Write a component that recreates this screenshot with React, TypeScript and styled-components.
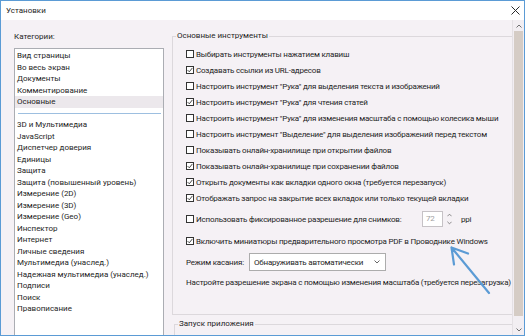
import React from "react";
import styled, { createGlobalStyle } from "styled-components";

const FONT = `Roboto, "Noto Sans", "Liberation Sans", sans-serif`;

const GlobalStyle = createGlobalStyle`
  html, body { margin: 0; padding: 0; background: #ffffff; }
  body { font-family: ${FONT}; }
  * { box-sizing: border-box; }
`;

const Window = styled.div`
  position: relative;
  width: 525px;
  height: 336px;
  border: 1px solid #5b9bd5;
  display: flex;
  flex-direction: column;
  overflow: hidden;
  background: #f5f1f5;
  color: #1e1e1e;
  font-size: 8px;
  font-family: ${FONT};
`;

const TitleBar = styled.div`
  height: 19px;
  flex: none;
  background: #ffffff;
  display: flex;
  align-items: center;
  justify-content: space-between;
  padding: 0 4px 0 5px;
  line-height: 10px;
`;

const Body = styled.div`
  flex: 1;
  min-height: 0;
  display: flex;
`;

const LeftPane = styled.div`
  width: 165px;
  flex: none;
  display: flex;
  flex-direction: column;
  padding: 12px 0 0 13px;
`;

const PaneLabel = styled.div`
  line-height: 10px;
  height: 10px;
  margin-bottom: 6px;
`;

const ListBox = styled.div`
  width: 150px;
  flex: 1;
  background: #ffffff;
  border: 1px solid #abadb3;
  border-bottom: none;
  padding-top: 1px;
`;

const ListItem = styled.div<{ $selected?: boolean }>`
  height: 11.5px;
  line-height: 11.5px;
  padding-left: 2px;
  white-space: nowrap;
  background: ${(p) => (p.$selected ? "#ece8ec" : "transparent")};
`;

const ListSeparator = styled.div`
  height: 11.5px;
  display: flex;
  align-items: center;
  padding: 0 2px 0 3px;
  &::after {
    content: "";
    flex: 1;
    height: 1px;
    background: #9dbfe0;
  }
`;

const RightPane = styled.div`
  flex: 1;
  min-width: 0;
  display: flex;
`;

const Content = styled.div`
  flex: 1;
  min-width: 0;
  overflow: hidden;
  padding: 11px 0 0 6px;
`;

const Group = styled.fieldset<{ $indent?: number }>`
  margin: 0 0 0 ${(p) => p.$indent ?? 0}px;
  padding: 0;
  border: 1px solid #dcd8dc;
  border-right: none;
  min-width: 0;
`;

const GroupTitle = styled.legend`
  margin-left: 3px;
  padding: 0 1px;
  line-height: 10px;
  height: 10px;
`;

const Rows = styled.div<{ $bottom: number }>`
  padding: 5px 0 ${(p) => p.$bottom}px 13px;
  letter-spacing: -0.2px;
`;

const Row = styled.div<{ $top?: number; $h?: number }>`
  display: flex;
  align-items: center;
  height: ${(p) => p.$h ?? 16}px;
  margin-top: ${(p) => p.$top ?? 0}px;
  white-space: nowrap;
`;

const Box = styled.span`
  width: 8px;
  height: 8px;
  flex: none;
  border: 1px solid #333333;
  background: #ffffff;
  margin-right: 2px;
  display: flex;
  align-items: center;
  justify-content: center;
`;

const FixedLabel = styled.span<{ $w: number }>`
  width: ${(p) => p.$w}px;
  flex: none;
`;

const SpinInput = styled.span`
  width: 21px;
  height: 16px;
  flex: none;
  border: 1px solid #c6c2c6;
  background: #ffffff;
  color: #a0a0a0;
  padding-left: 3px;
  line-height: 14px;
`;

const SpinButtons = styled.span`
  width: 7px;
  height: 16px;
  margin-left: 3px;
  flex: none;
  display: flex;
  flex-direction: column;
  justify-content: space-around;
  align-items: center;
`;

const Unit = styled.span`
  margin-left: 8px;
`;

const Select = styled.span`
  width: 137px;
  height: 18px;
  flex: none;
  border: 1px solid #acacac;
  background: #ffffff;
  display: flex;
  align-items: center;
  justify-content: space-between;
  padding: 0 5px 0 4px;
`;

const SecondGroup = styled(Group)`
  margin-top: 4px;
  height: 40px;
`;

const ScrollBar = styled.div`
  width: 12px;
  flex: none;
  display: flex;
  flex-direction: column;
  background: #f2eef2;
  border-left: 1px solid #e4e0e4;
`;

const ScrollButton = styled.div`
  height: 11px;
  flex: none;
  display: flex;
  align-items: center;
  justify-content: center;
`;

const Track = styled.div`
  flex: 1;
  padding: 0 1px 8px 1px;
  display: flex;
`;

const Thumb = styled.div`
  flex: 1;
  background: #d5ccc5;
`;

const ArrowOverlay = styled.svg`
  position: absolute;
  left: 440px;
  top: 238px;
  pointer-events: none;
`;

const Check = () => (
  <svg width="6" height="6" viewBox="0 0 6 6">
    <path d="M0.6 3.1 L2.3 4.8 L5.4 0.9" fill="none" stroke="#333" strokeWidth="0.9" />
  </svg>
);

const CheckBox = ({ checked }: { checked?: boolean }) => <Box>{checked ? <Check /> : null}</Box>;

const Chevron = ({ up, size = 5, color = "#555" }: { up?: boolean; size?: number; color?: string }) => (
  <svg width={size} height={Math.ceil(size / 2) + 1} viewBox="0 0 6 4">
    <path
      d={up ? "M0.5 3.5 L3 1 L5.5 3.5" : "M0.5 0.5 L3 3 L5.5 0.5"}
      fill="none"
      stroke={color}
      strokeWidth="0.9"
    />
  </svg>
);

const categoriesTop = ["Вид страницы", "Во весь экран", "Документы", "Комментирование", "Основные"];
const categoriesBottom = [
  "3D и Мультимедиа",
  "JavaScript",
  "Диспетчер доверия",
  "Единицы",
  "Защита",
  "Защита (повышенный уровень)",
  "Измерение (2D)",
  "Измерение (3D)",
  "Измерение (Geo)",
  "Инспектор",
  "Интернет",
  "Личные сведения",
  "Мультимедиа (унаслед.)",
  "Надежная мультимедиа (унаслед.)",
  "Подписи",
  "Поиск",
  "Правописание",
];

const options: { text: string; checked: boolean }[] = [
  { text: "Выбирать инструменты нажатием клавиш", checked: false },
  { text: "Создавать ссылки из URL-адресов", checked: true },
  { text: "Настроить инструмент \"Рука\" для выделения текста и изображений", checked: false },
  { text: "Настроить инструмент \"Рука\" для чтения статей", checked: true },
  { text: "Настроить инструмент \"Рука\" для изменения масштаба с помощью колесика мыши", checked: false },
  { text: "Настроить инструмент \"Выделение\" для выделения изображений перед текстом", checked: false },
  { text: "Показывать онлайн-хранилище при открытии файлов", checked: false },
  { text: "Показывать онлайн-хранилище при сохранении файлов", checked: true },
  { text: "Открыть документы как вкладки одного окна (требуется перезапуск)", checked: true },
  { text: "Отображать запрос на закрытие всех вкладок или только текущей вкладки", checked: true },
];

export default function App() {
  return (
    <>
      <GlobalStyle />
      <Window>
        <TitleBar>
          <span>Установки</span>
          <svg width="9" height="9" viewBox="0 0 9 9">
            <path d="M0.5 0.5 L8.5 8.5 M8.5 0.5 L0.5 8.5" stroke="#2a2a2a" strokeWidth="1" />
          </svg>
        </TitleBar>
        <Body>
          <LeftPane>
            <PaneLabel>Категории:</PaneLabel>
            <ListBox>
              {categoriesTop.map((c) => (
                <ListItem key={c} $selected={c === "Основные"}>
                  {c}
                </ListItem>
              ))}
              <ListSeparator />
              {categoriesBottom.map((c) => (
                <ListItem key={c}>{c}</ListItem>
              ))}
            </ListBox>
          </LeftPane>
          <RightPane>
            <Content>
              <Group>
                <GroupTitle>Основные инструменты</GroupTitle>
                <Rows $bottom={24}>
                  {options.map((o) => (
                    <Row key={o.text}>
                      <CheckBox checked={o.checked} />
                      {o.text}
                    </Row>
                  ))}
                  <Row $top={4} $h={18}>
                    <CheckBox />
                    <FixedLabel $w={226}>Использовать фиксированное разрешение для снимков:</FixedLabel>
                    <SpinInput>72</SpinInput>
                    <SpinButtons>
                      <Chevron up size={5} color="#666" />
                      <Chevron size={5} color="#666" />
                    </SpinButtons>
                    <Unit>ppi</Unit>
                  </Row>
                  <Row $top={5}>
                    <CheckBox checked />
                    Включить миниатюры предварительного просмотра PDF в Проводнике Windows
                  </Row>
                  <Row $top={4} $h={18}>
                    <FixedLabel $w={63}>Режим касания:</FixedLabel>
                    <Select>
                      <span>Обнаруживать автоматически</span>
                      <Chevron size={6} color="#555" />
                    </Select>
                  </Row>
                  <Row $top={3}>
                    Настройте разрешение экрана с помощью изменения масштаба (требуется перезагрузка)
                  </Row>
                </Rows>
              </Group>
              <SecondGroup $indent={2}>
                <GroupTitle>Запуск приложения</GroupTitle>
              </SecondGroup>
            </Content>
            <ScrollBar>
              <ScrollButton>
                <Chevron up size={6} color="#606060" />
              </ScrollButton>
              <Track>
                <Thumb />
              </Track>
              <ScrollButton>
                <Chevron size={6} color="#606060" />
              </ScrollButton>
            </ScrollBar>
          </RightPane>
        </Body>
        <ArrowOverlay width="60" height="62" viewBox="0 0 60 62">
          <path
            d="M10.5 8.5 L48 54 M10.5 8.5 L27 14.5 M10.5 8.5 L13 25.5"
            fill="none"
            stroke="#5b9bd5"
            strokeWidth="2.2"
            strokeLinecap="round"
          />
        </ArrowOverlay>
      </Window>
    </>
  );
}
